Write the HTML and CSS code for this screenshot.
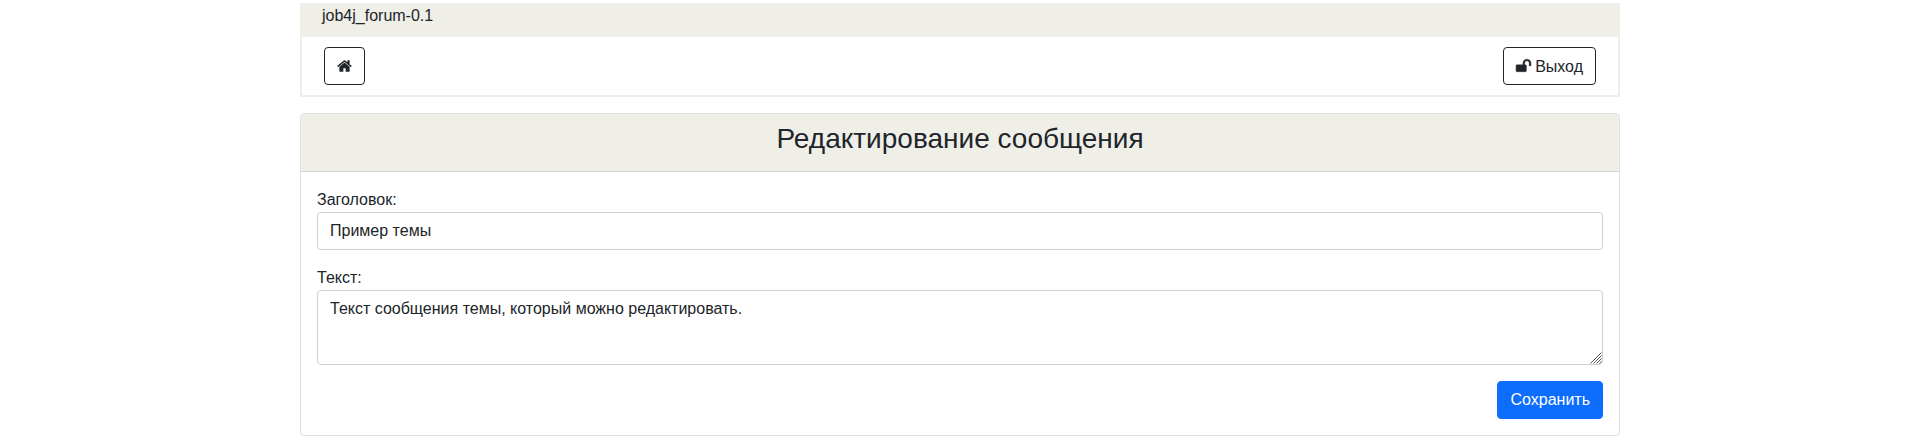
FILE: index.html
```html
<!DOCTYPE html>
<html lang="ru">
<head>
  <meta charset="utf-8">
  <meta name="viewport" content="width=device-width, initial-scale=1">
  <title>job4j_forum-0.1</title>
  <link rel="stylesheet" href="styles.css">
</head>
<body>
  <div class="container">
    <header class="topbar">
      <div class="brand">job4j_forum-0.1</div>
      <nav class="nav">
        <a class="btn btn-outline" href="#" aria-label="Главная">
          <svg class="icon" viewBox="64 0 1664 1792" aria-hidden="true"><path d="M1472 992v480q0 26-19 45t-45 19h-384v-384h-256v384h-384q-26 0-45-19t-19-45v-480q0-1 .5-3t.5-3l575-474 575 474q1 2 1 6zm223-69l-62 74q-8 9-21 11h-3q-13 0-21-7l-692-577-692 577q-12 8-24 7-13-2-21-11l-62-74q-8-10-7-23.5t11-21.5l719-599q32-26 76-26t76 26l244 204v-195q0-14 9-23t23-9h192q14 0 23 9t9 23v408l219 182q10 8 11 21.5t-7 23.5z"/></svg>
        </a>
        <a class="btn btn-outline" href="#">
          <svg class="icon" viewBox="64 0 1664 1792" aria-hidden="true"><path stroke="currentColor" stroke-width="50" d="M1728 576v256q0 26-19 45t-45 19h-64q-26 0-45-19t-19-45v-256q0-106-75-181t-181-75-181 75-75 181v192h96q40 0 68 28t28 68v576q0 40-28 68t-68 28h-960q-40 0-68-28t-28-68v-576q0-40 28-68t68-28h672v-192q0-185 131.5-316.5t316.5-131.5 316.5 131.5 131.5 316.5z"/></svg>
          Выход
        </a>
      </nav>
    </header>
    <main class="card">
      <div class="card-header">
        <h1 class="title">Редактирование сообщения</h1>
      </div>
      <form class="card-body">
        <div class="field">
          <label for="name">Заголовок:</label>
          <input class="control" id="name" type="text" value="Пример темы">
        </div>
        <div class="field">
          <label for="text">Текст:</label>
          <textarea class="control control-area" id="text">Текст сообщения темы, который можно редактировать.</textarea>
          <svg class="grip" viewBox="0 0 12 12" aria-hidden="true"><path d="M0.5 11.5l11-11M3.5 11.5l8-8M6.5 11.5l5-5M9.5 11.5l2-2"/></svg>
        </div>
        <button class="btn btn-primary" type="button">Сохранить</button>
      </form>
    </main>
  </div>
</body>
</html>
```
FILE: styles.css
```css
* {
  box-sizing: border-box;
}

body {
  margin: 0;
  background: #fff;
  color: #212529;
  font: 16px/24px "Liberation Sans", Arial, sans-serif;
}

.container {
  max-width: 1321px;
  margin: 0 auto;
  padding: 3px 0 0 1px;
}

.topbar {
  border: 2px solid #efefe8;
  border-top: 0;
}

.brand {
  padding: 1px 20px 9px;
  background: #efefe8;
}

.nav {
  display: flex;
  justify-content: space-between;
  padding: 10px 22px;
}

.btn {
  display: flex;
  align-items: center;
  gap: 4px;
  padding: 6px 12px;
  border: 1px solid transparent;
  border-radius: 4px;
  font: inherit;
  text-decoration: none;
  cursor: pointer;
}

.btn-outline {
  padding: 7px 12px 5px;
  border-color: #212529;
  color: #212529;
}

.btn-primary {
  align-self: flex-end;
  border-color: #0d6efd;
  background: #0d6efd;
  color: #fff;
}

.icon {
  width: 15px;
  height: 16px;
  margin-bottom: 2px;
  fill: currentColor;
  overflow: visible;
}

.card {
  margin-top: 16px;
  border: 1px solid #dfdfdf;
  border-radius: 4px;
}

.card-header {
  padding: 8px 16px 15px;
  border-bottom: 1px solid #d0d2cd;
  border-radius: 3px 3px 0 0;
  background: #efefe8;
}

.title {
  margin: 0;
  font-size: 28px;
  font-weight: 500;
  line-height: 34px;
  text-align: center;
}

.card-body {
  display: flex;
  flex-direction: column;
  gap: 16px;
  padding: 16px;
}

.field {
  position: relative;
  display: flex;
  flex-direction: column;
}

.control {
  width: 100%;
  padding: 6px 12px;
  border: 1px solid #cdd0d8;
  border-radius: 4px;
  background: #fff;
  color: #212529;
  font: inherit;
}

.control-area {
  height: 75px;
  resize: vertical;
}

.control-area::-webkit-resizer {
  background: transparent;
}

.grip {
  position: absolute;
  right: 1px;
  bottom: 1px;
  width: 12px;
  height: 12px;
  fill: none;
  stroke: #555;
  pointer-events: none;
}
```
